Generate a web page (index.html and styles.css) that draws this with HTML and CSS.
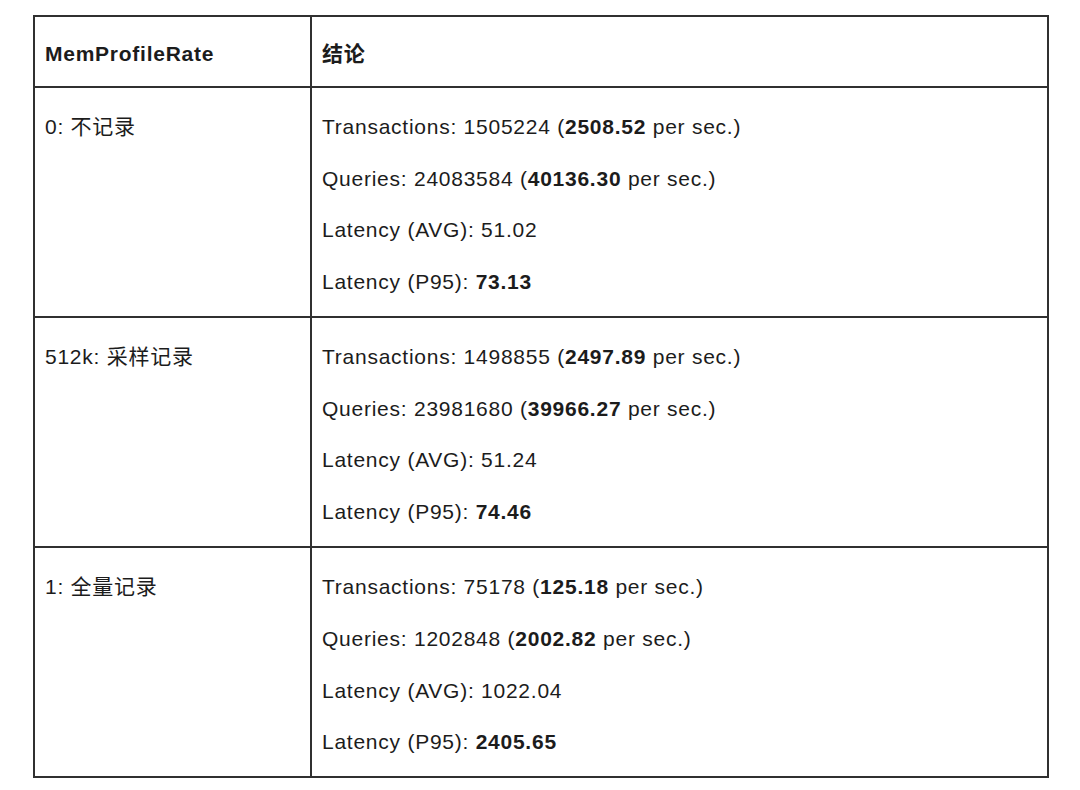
FILE: index.html
```html
<!DOCTYPE html>
<html lang="zh-CN">
<head>
<meta charset="utf-8">
<title>MemProfileRate</title>
<link rel="stylesheet" href="styles.css">
</head>
<body>
<div class="page">
  <table class="result">
    <thead>
      <tr>
        <th class="col-rate">MemProfileRate</th>
        <th class="col-result">结论</th>
      </tr>
    </thead>
    <tbody>
      <tr>
        <td class="col-rate"><div class="line">0: 不记录</div></td>
        <td class="col-result">
          <div class="lines">
            <div class="line">Transactions: 1505224 (<b>2508.52</b> per sec.)</div>
            <div class="line">Queries: 24083584 (<b>40136.30</b> per sec.)</div>
            <div class="line">Latency (AVG): 51.02</div>
            <div class="line">Latency (P95): <b>73.13</b></div>
          </div>
        </td>
      </tr>
      <tr>
        <td class="col-rate"><div class="line">512k: 采样记录</div></td>
        <td class="col-result">
          <div class="lines">
            <div class="line">Transactions: 1498855 (<b>2497.89</b> per sec.)</div>
            <div class="line">Queries: 23981680 (<b>39966.27</b> per sec.)</div>
            <div class="line">Latency (AVG): 51.24</div>
            <div class="line">Latency (P95): <b>74.46</b></div>
          </div>
        </td>
      </tr>
      <tr>
        <td class="col-rate"><div class="line">1: 全量记录</div></td>
        <td class="col-result">
          <div class="lines">
            <div class="line">Transactions: 75178 (<b>125.18</b> per sec.)</div>
            <div class="line">Queries: 1202848 (<b>2002.82</b> per sec.)</div>
            <div class="line">Latency (AVG): 1022.04</div>
            <div class="line">Latency (P95): <b>2405.65</b></div>
          </div>
        </td>
      </tr>
    </tbody>
  </table>
</div>
</body>
</html>
```

FILE: styles.css
```css
html, body {
  margin: 0;
  padding: 0;
  background: #ffffff;
}

.page {
  padding: 15px 0 0 33px;
}

.result {
  border-collapse: collapse;
  width: 1016px;
  table-layout: fixed;
  font-family: "Liberation Sans", Arial, "Noto Sans CJK SC", sans-serif;
  font-size: 21px;
  letter-spacing: 0.75px;
  color: #1c1c1c;
}

.result th,
.result td {
  border: 2px solid #303030;
  padding: 24px 10px 19px 10px;
  text-align: left;
  vertical-align: top;
  line-height: 30px;
}

.result th {
  font-weight: bold;
  padding-top: 22px;
  padding-bottom: 17px;
}

.col-rate {
  width: 255px;
}

.result b {
  font-weight: bold;
}

.lines {
  display: flex;
  flex-direction: column;
  gap: 21.7px;
}

.line {
  white-space: nowrap;
}
```
